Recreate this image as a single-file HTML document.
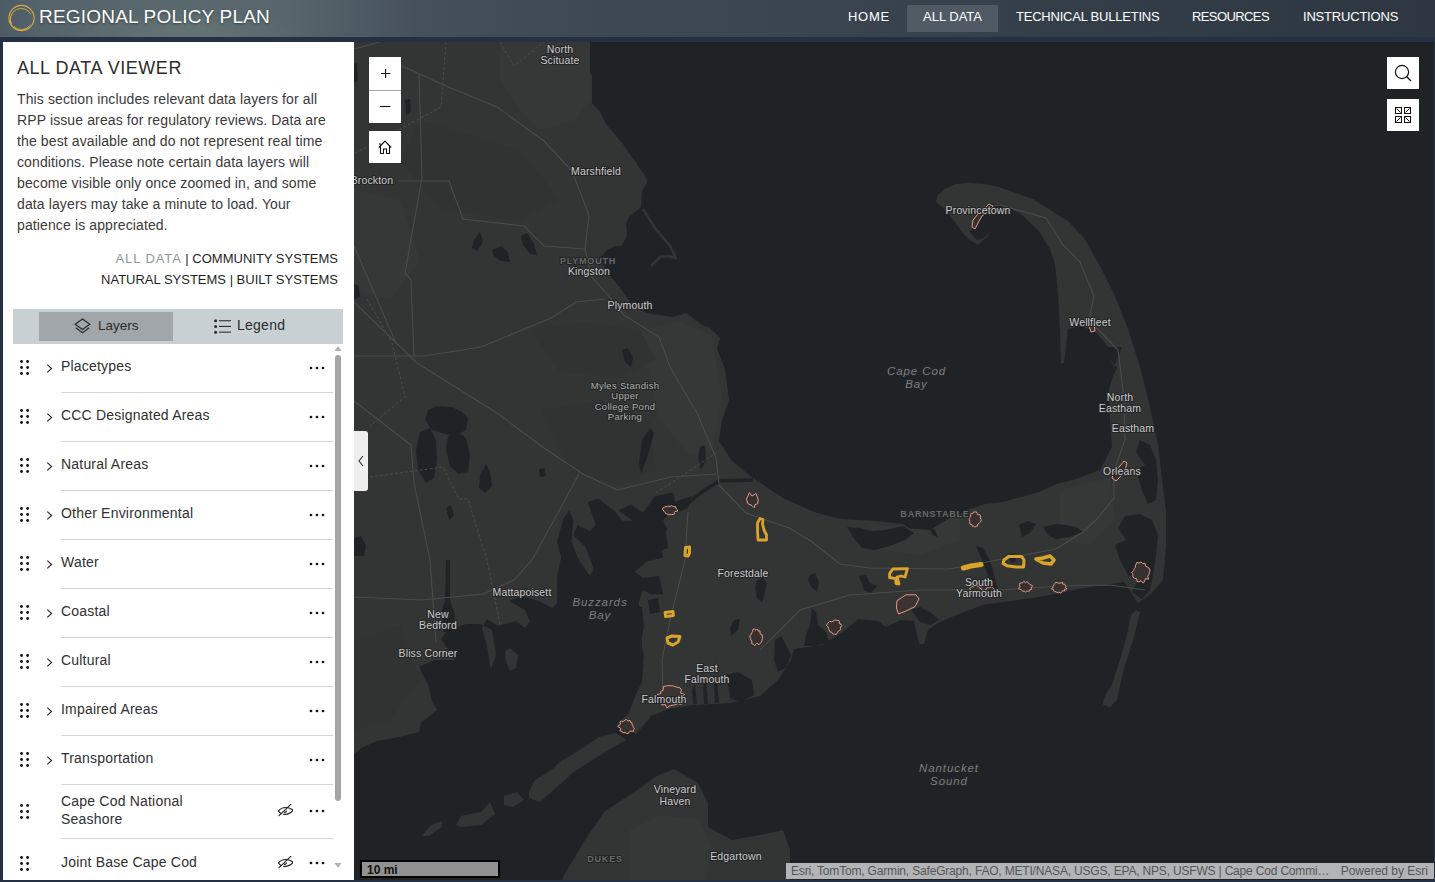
<!DOCTYPE html>
<html><head><meta charset="utf-8">
<style>
*{box-sizing:border-box;margin:0;padding:0}
html,body{width:1435px;height:882px;overflow:hidden;background:#243044;font-family:"Liberation Sans",sans-serif}
#hdr{position:absolute;left:0;top:0;width:1435px;height:37px;
background:radial-gradient(ellipse 130px 20px at 180px 32px,rgba(120,138,122,.35),rgba(120,138,122,0)),linear-gradient(90deg,#4d5c64 0%,#55646b 3%,#5a696e 14%,#57656c 20%,#4f5b64 25%,#45505a 29%,#3e4953 40%,#3a4550 56%,#353f4a 72%,#313b46 85%,#2d3641 100%)}
#logo{position:absolute;left:7px;top:4px;width:29px;height:29px}
#title{position:absolute;left:39px;top:6px;font-size:19px;color:#fff;letter-spacing:0.2px;line-height:22px;text-shadow:0 1px 2px rgba(0,0,0,.4)}
.nav{position:absolute;top:5px;height:27px;line-height:24px;font-size:13px;color:#fff;white-space:nowrap}
#panel{position:absolute;left:3px;top:42px;width:351px;height:838px;background:#fff;overflow:hidden}
#map{position:absolute;left:354px;top:42px;width:1080px;height:838px;background:#202326;overflow:hidden}

#ptitle{position:absolute;left:14px;top:15px;font-size:18px;letter-spacing:0.55px;color:#2c2c2c;line-height:22px;white-space:nowrap}
#pdesc{position:absolute;left:14px;top:47px;white-space:nowrap;font-size:14px;line-height:21px;color:#3a3a3a;letter-spacing:0.12px}
#plinks{position:absolute;right:16px;top:206px;font-size:13px;line-height:21px;color:#1f1f1f;text-align:right;white-space:nowrap}
#plinks .g{color:#8e989c;letter-spacing:0.9px}
#tabs{position:absolute;left:10px;top:267px;width:330px;height:35px;background:#c9d0d3}
#tabL{position:absolute;left:26px;top:3px;width:134px;height:29px;background:#a0a6a9}
.tabt{position:absolute;top:0;height:29px;line-height:29px;font-size:14px;color:#2b2b2b}
.row{position:absolute;left:0;width:340px;height:49px}
.drag{position:absolute;left:17px;width:10px;height:15px}
.chev{position:absolute;left:43px;width:7px;height:9px}
.rt{position:absolute;left:58px;font-size:14px;color:#303030;letter-spacing:0.2px;line-height:17px;white-space:nowrap}
.dots{position:absolute;left:306px;width:16px;height:4px}
.sep{position:absolute;left:58px;width:272px;height:1px;background:#d4d4d4}
.eye{position:absolute;left:274px;width:16px;height:14px}
#panel svg{display:block}
.drag svg,.chev svg,.dots svg,.eye svg{width:100%;height:100%}
#sb{position:absolute;left:332px;top:313px;width:6px;height:446px;background:#a5a5a5;border-radius:3px}
</style></head><body>
<div id="hdr">
  <svg id="logo" viewBox="0 0 29 29"><g fill="none" stroke="#d6ab45" stroke-width="1.1"><circle cx="14.5" cy="14" r="12.6"/><path d="M4.5 20 A10.5 10.5 0 1 1 24 10.5" stroke-width="0.9"/><path d="M5.5 9 A9.6 9.6 0 0 0 22 22.5" stroke-width="0.9"/><path d="M7 22.5 A11 11 0 0 0 23.5 21" stroke-width="0.8"/></g></svg>
  <div id="title">REGIONAL POLICY PLAN</div>
  <div class="nav" style="left:848px;letter-spacing:0.7px">HOME</div>
  <div class="nav" style="left:907px;width:91px;background:rgba(140,150,155,.3);text-align:center">ALL DATA</div>
  <div class="nav" style="left:1016px;letter-spacing:-0.22px">TECHNICAL BULLETINS</div>
  <div class="nav" style="left:1192px;letter-spacing:-0.6px">RESOURCES</div>
  <div class="nav" style="left:1303px;letter-spacing:-0.2px">INSTRUCTIONS</div>
</div>
<div id="panel">
<div id="ptitle">ALL DATA VIEWER</div>
<div id="pdesc">This section includes relevant data layers for all<br>RPP issue areas for regulatory reviews. Data are<br>the best available and do not represent real time<br>conditions. Please note certain data layers will<br>become visible only once zoomed in, and some<br>data layers may take a minute to load. Your<br>patience is appreciated.</div>
<div id="plinks"><span class="g">ALL DATA</span> | COMMUNITY SYSTEMS<br>NATURAL SYSTEMS | BUILT SYSTEMS</div>
<div id="tabs"><div id="tabL"></div><svg style="position:absolute;left:61px;top:9px" width="17" height="17" viewBox="0 0 17 17"><g fill="none" stroke="#2b2b2b" stroke-width="1.2" stroke-linejoin="miter"><path d="M8.5 1 L15.8 6.3 L8.5 11.6 L1.2 6.3Z"/><path d="M1.8 9.8 L8.5 14.8 L15.2 9.8"/></g></svg><div class="tabt" style="left:85px;top:2px;font-size:13.5px">Layers</div><svg style="position:absolute;left:201px;top:10px" width="17" height="15" viewBox="0 0 17 15"><g fill="#2b2b2b"><circle cx="1.6" cy="1.8" r="1.5"/><circle cx="1.6" cy="7.5" r="1.5"/><circle cx="1.6" cy="13.2" r="1.5"/><rect x="5" y="1.2" width="12" height="1.1"/><rect x="5" y="6.9" width="12" height="1.1"/><rect x="5" y="12.6" width="12" height="1.1"/></g></svg><div class="tabt" style="left:224px;top:2px;letter-spacing:0.25px">Legend</div></div>
<div class="drag" style="top:318.4px"><svg viewBox="0 0 10 15"><g fill="#111"><circle cx="1.5" cy="1.5" r="1.4"/><circle cx="7.6" cy="1.5" r="1.4"/><circle cx="1.5" cy="7.5" r="1.4"/><circle cx="7.6" cy="7.5" r="1.4"/><circle cx="1.5" cy="13.5" r="1.4"/><circle cx="7.6" cy="13.5" r="1.4"/></g></svg></div><div class="chev" style="top:321.5px"><svg viewBox="0 0 7 9"><path d="M1.3 0.6 L5.6 4.5 L1.3 8.4" fill="none" stroke="#222" stroke-width="1.1"/></svg></div><div class="rt" style="top:316px">Placetypes</div><div class="dots" style="top:324px"><svg viewBox="0 0 16 4"><g fill="#111"><circle cx="2" cy="2" r="1.35"/><circle cx="8" cy="2" r="1.35"/><circle cx="14" cy="2" r="1.35"/></g></svg></div><div class="sep" style="top:350px"></div>
<div class="drag" style="top:367.4px"><svg viewBox="0 0 10 15"><g fill="#111"><circle cx="1.5" cy="1.5" r="1.4"/><circle cx="7.6" cy="1.5" r="1.4"/><circle cx="1.5" cy="7.5" r="1.4"/><circle cx="7.6" cy="7.5" r="1.4"/><circle cx="1.5" cy="13.5" r="1.4"/><circle cx="7.6" cy="13.5" r="1.4"/></g></svg></div><div class="chev" style="top:370.5px"><svg viewBox="0 0 7 9"><path d="M1.3 0.6 L5.6 4.5 L1.3 8.4" fill="none" stroke="#222" stroke-width="1.1"/></svg></div><div class="rt" style="top:365px">CCC Designated Areas</div><div class="dots" style="top:373px"><svg viewBox="0 0 16 4"><g fill="#111"><circle cx="2" cy="2" r="1.35"/><circle cx="8" cy="2" r="1.35"/><circle cx="14" cy="2" r="1.35"/></g></svg></div><div class="sep" style="top:399px"></div>
<div class="drag" style="top:416.4px"><svg viewBox="0 0 10 15"><g fill="#111"><circle cx="1.5" cy="1.5" r="1.4"/><circle cx="7.6" cy="1.5" r="1.4"/><circle cx="1.5" cy="7.5" r="1.4"/><circle cx="7.6" cy="7.5" r="1.4"/><circle cx="1.5" cy="13.5" r="1.4"/><circle cx="7.6" cy="13.5" r="1.4"/></g></svg></div><div class="chev" style="top:419.5px"><svg viewBox="0 0 7 9"><path d="M1.3 0.6 L5.6 4.5 L1.3 8.4" fill="none" stroke="#222" stroke-width="1.1"/></svg></div><div class="rt" style="top:414px">Natural Areas</div><div class="dots" style="top:422px"><svg viewBox="0 0 16 4"><g fill="#111"><circle cx="2" cy="2" r="1.35"/><circle cx="8" cy="2" r="1.35"/><circle cx="14" cy="2" r="1.35"/></g></svg></div><div class="sep" style="top:448px"></div>
<div class="drag" style="top:465.4px"><svg viewBox="0 0 10 15"><g fill="#111"><circle cx="1.5" cy="1.5" r="1.4"/><circle cx="7.6" cy="1.5" r="1.4"/><circle cx="1.5" cy="7.5" r="1.4"/><circle cx="7.6" cy="7.5" r="1.4"/><circle cx="1.5" cy="13.5" r="1.4"/><circle cx="7.6" cy="13.5" r="1.4"/></g></svg></div><div class="chev" style="top:468.5px"><svg viewBox="0 0 7 9"><path d="M1.3 0.6 L5.6 4.5 L1.3 8.4" fill="none" stroke="#222" stroke-width="1.1"/></svg></div><div class="rt" style="top:463px">Other Environmental</div><div class="dots" style="top:471px"><svg viewBox="0 0 16 4"><g fill="#111"><circle cx="2" cy="2" r="1.35"/><circle cx="8" cy="2" r="1.35"/><circle cx="14" cy="2" r="1.35"/></g></svg></div><div class="sep" style="top:497px"></div>
<div class="drag" style="top:514.4px"><svg viewBox="0 0 10 15"><g fill="#111"><circle cx="1.5" cy="1.5" r="1.4"/><circle cx="7.6" cy="1.5" r="1.4"/><circle cx="1.5" cy="7.5" r="1.4"/><circle cx="7.6" cy="7.5" r="1.4"/><circle cx="1.5" cy="13.5" r="1.4"/><circle cx="7.6" cy="13.5" r="1.4"/></g></svg></div><div class="chev" style="top:517.5px"><svg viewBox="0 0 7 9"><path d="M1.3 0.6 L5.6 4.5 L1.3 8.4" fill="none" stroke="#222" stroke-width="1.1"/></svg></div><div class="rt" style="top:512px">Water</div><div class="dots" style="top:520px"><svg viewBox="0 0 16 4"><g fill="#111"><circle cx="2" cy="2" r="1.35"/><circle cx="8" cy="2" r="1.35"/><circle cx="14" cy="2" r="1.35"/></g></svg></div><div class="sep" style="top:546px"></div>
<div class="drag" style="top:563.4px"><svg viewBox="0 0 10 15"><g fill="#111"><circle cx="1.5" cy="1.5" r="1.4"/><circle cx="7.6" cy="1.5" r="1.4"/><circle cx="1.5" cy="7.5" r="1.4"/><circle cx="7.6" cy="7.5" r="1.4"/><circle cx="1.5" cy="13.5" r="1.4"/><circle cx="7.6" cy="13.5" r="1.4"/></g></svg></div><div class="chev" style="top:566.5px"><svg viewBox="0 0 7 9"><path d="M1.3 0.6 L5.6 4.5 L1.3 8.4" fill="none" stroke="#222" stroke-width="1.1"/></svg></div><div class="rt" style="top:561px">Coastal</div><div class="dots" style="top:569px"><svg viewBox="0 0 16 4"><g fill="#111"><circle cx="2" cy="2" r="1.35"/><circle cx="8" cy="2" r="1.35"/><circle cx="14" cy="2" r="1.35"/></g></svg></div><div class="sep" style="top:595px"></div>
<div class="drag" style="top:612.4px"><svg viewBox="0 0 10 15"><g fill="#111"><circle cx="1.5" cy="1.5" r="1.4"/><circle cx="7.6" cy="1.5" r="1.4"/><circle cx="1.5" cy="7.5" r="1.4"/><circle cx="7.6" cy="7.5" r="1.4"/><circle cx="1.5" cy="13.5" r="1.4"/><circle cx="7.6" cy="13.5" r="1.4"/></g></svg></div><div class="chev" style="top:615.5px"><svg viewBox="0 0 7 9"><path d="M1.3 0.6 L5.6 4.5 L1.3 8.4" fill="none" stroke="#222" stroke-width="1.1"/></svg></div><div class="rt" style="top:610px">Cultural</div><div class="dots" style="top:618px"><svg viewBox="0 0 16 4"><g fill="#111"><circle cx="2" cy="2" r="1.35"/><circle cx="8" cy="2" r="1.35"/><circle cx="14" cy="2" r="1.35"/></g></svg></div><div class="sep" style="top:644px"></div>
<div class="drag" style="top:661.4px"><svg viewBox="0 0 10 15"><g fill="#111"><circle cx="1.5" cy="1.5" r="1.4"/><circle cx="7.6" cy="1.5" r="1.4"/><circle cx="1.5" cy="7.5" r="1.4"/><circle cx="7.6" cy="7.5" r="1.4"/><circle cx="1.5" cy="13.5" r="1.4"/><circle cx="7.6" cy="13.5" r="1.4"/></g></svg></div><div class="chev" style="top:664.5px"><svg viewBox="0 0 7 9"><path d="M1.3 0.6 L5.6 4.5 L1.3 8.4" fill="none" stroke="#222" stroke-width="1.1"/></svg></div><div class="rt" style="top:659px">Impaired Areas</div><div class="dots" style="top:667px"><svg viewBox="0 0 16 4"><g fill="#111"><circle cx="2" cy="2" r="1.35"/><circle cx="8" cy="2" r="1.35"/><circle cx="14" cy="2" r="1.35"/></g></svg></div><div class="sep" style="top:693px"></div>
<div class="drag" style="top:710.4px"><svg viewBox="0 0 10 15"><g fill="#111"><circle cx="1.5" cy="1.5" r="1.4"/><circle cx="7.6" cy="1.5" r="1.4"/><circle cx="1.5" cy="7.5" r="1.4"/><circle cx="7.6" cy="7.5" r="1.4"/><circle cx="1.5" cy="13.5" r="1.4"/><circle cx="7.6" cy="13.5" r="1.4"/></g></svg></div><div class="chev" style="top:713.5px"><svg viewBox="0 0 7 9"><path d="M1.3 0.6 L5.6 4.5 L1.3 8.4" fill="none" stroke="#222" stroke-width="1.1"/></svg></div><div class="rt" style="top:708px">Transportation</div><div class="dots" style="top:716px"><svg viewBox="0 0 16 4"><g fill="#111"><circle cx="2" cy="2" r="1.35"/><circle cx="8" cy="2" r="1.35"/><circle cx="14" cy="2" r="1.35"/></g></svg></div><div class="sep" style="top:742px"></div>
<div class="drag" style="top:762.4px"><svg viewBox="0 0 10 15"><g fill="#111"><circle cx="1.5" cy="1.5" r="1.4"/><circle cx="7.6" cy="1.5" r="1.4"/><circle cx="1.5" cy="7.5" r="1.4"/><circle cx="7.6" cy="7.5" r="1.4"/><circle cx="1.5" cy="13.5" r="1.4"/><circle cx="7.6" cy="13.5" r="1.4"/></g></svg></div><div class="rt" style="top:751px">Cape Cod National</div><div class="rt" style="top:769px">Seashore</div><div class="eye" style="top:762px"><svg viewBox="0 0 16 14"><g fill="none" stroke="#1a1a1a" stroke-width="1.1" stroke-linecap="round"><path d="M1.5 7 Q7 0.5 16 6"/><path d="M16 6.4 Q12 11 6.5 10.3"/><path d="M1.5 7 L3.6 9.3"/><path d="M7.2 8.3 Q8.8 8.6 9.6 7"/><path d="M2 11.7 L14 0.2"/></g></svg></div><div class="dots" style="top:767px"><svg viewBox="0 0 16 4"><g fill="#111"><circle cx="2" cy="2" r="1.35"/><circle cx="8" cy="2" r="1.35"/><circle cx="14" cy="2" r="1.35"/></g></svg></div><div class="sep" style="top:796px"></div>
<div class="drag" style="top:814.4px"><svg viewBox="0 0 10 15"><g fill="#111"><circle cx="1.5" cy="1.5" r="1.4"/><circle cx="7.6" cy="1.5" r="1.4"/><circle cx="1.5" cy="7.5" r="1.4"/><circle cx="7.6" cy="7.5" r="1.4"/><circle cx="1.5" cy="13.5" r="1.4"/><circle cx="7.6" cy="13.5" r="1.4"/></g></svg></div><div class="rt" style="top:812px">Joint Base Cape Cod</div><div class="eye" style="top:814px"><svg viewBox="0 0 16 14"><g fill="none" stroke="#1a1a1a" stroke-width="1.1" stroke-linecap="round"><path d="M1.5 7 Q7 0.5 16 6"/><path d="M16 6.4 Q12 11 6.5 10.3"/><path d="M1.5 7 L3.6 9.3"/><path d="M7.2 8.3 Q8.8 8.6 9.6 7"/><path d="M2 11.7 L14 0.2"/></g></svg></div><div class="dots" style="top:819px"><svg viewBox="0 0 16 4"><g fill="#111"><circle cx="2" cy="2" r="1.35"/><circle cx="8" cy="2" r="1.35"/><circle cx="14" cy="2" r="1.35"/></g></svg></div>
<svg style="position:absolute;left:331px;top:303px" width="8" height="7" viewBox="0 0 8 7"><path d="M4 1 L7.5 6 L0.5 6Z" fill="#b0b0b0"/></svg>
<div id="sb"></div>
<svg style="position:absolute;left:331px;top:819.5px" width="8" height="7" viewBox="0 0 8 7"><path d="M4 6 L7.5 1 L0.5 1Z" fill="#b0b0b0"/></svg>
</div>
<div id="map"><svg width="1080" height="838" viewBox="354 42 1080 838" style="position:absolute;left:0;top:0">
<rect x="354" y="42" width="1080" height="838" fill="#202326"/>
<g fill="#333534">
<path d="M340,30 L589,30 L589,42 L585,62 L592,76 L592,103 L600,112 L606,124 L623,144 L627,150 L641,170 L647,179 L647,183 L642,191 L641,207 L629,217 L626,223 L627,236 L621,246 L615,246 L607,250 L600,258 L607,272 L621,289 L631,303 L647,313 L672,317 L686,313 L702,325 L710,328 L720,338 L717,349 L725,369 L729,400 L722,420 L719,441 L732,461 L753,478 L783,498 L814,512 L840,519 L876,521 L903,524 L916,533 L931,532 L949,521 L967,510 L985,504 L1003,502 L1021,497 L1039,492 L1057,484 L1076,479 L1100,470 L1112,447 L1110,420 L1109,389 L1113,376 L1117,368 L1110,359 L1114,367 L1122,347 L1108,347 L1096,332 L1081,326 L1068,329 L1064,363 L1061,363 L1060,330 L1058,294 L1055,264 L1050,249 L1039,231 L1022,215 L1008,207 L989,203 L979,214 L973,227 L970,232 L977,240 L984,238 L991,230 L986,238 L978,245 L970,240 L962,232 L955,222 L946,210 L936,202 L938,195 L945,189 L956,184 L968,183 L984,184 L999,187 L1016,193 L1033,199 L1050,210 L1069,222 L1084,238 L1099,264 L1114,294 L1128,329 L1140,367 L1149,403 L1158,444 L1161,471 L1166,512 L1166,546 L1163,580 L1151,594 L1138,603 L1124,582 L1090,587 L1039,597 L988,604 L980,606 L954,616 L938,623 L928,630 L924,644 L919,644 L914,621 L901,620 L886,627 L878,621 L858,619 L843,632 L822,645 L794,649 L791,660 L778,680 L760,696 L731,703 L694,705 L669,709 L651,716 L638,732 L636,734 L620,727 L616,725 L629,713 L636,694 L642,682 L644,654 L640,644 L644,627 L642,607 L561,599 L552,608 L539,601 L521,596 L509,601 L525,610 L530,621 L525,628 L516,621 L498,626 L487,619 L482,628 L487,646 L491,669 L496,655 L492,630 L480,624 L466,624 L448,630 L441,639 L455,660 L434,660 L419,667 L428,685 L432,701 L437,710 L421,723 L419,732 L399,737 L377,741 L361,748 L354,755 L340,760Z"/>
<path d="M1136,610 L1140,612 L1133,640 L1125,665 L1120,685 L1117,700 L1110,707 L1103,705 L1104,698 L1112,684 L1120,660 L1127,635 L1131,615Z"/>
<path d="M555,900 L563,877 L585,840 L605,811 L633,793 L657,776 L674,769 L698,783 L708,803 L708,827 L732,840 L766,834 L783,830 L790,850 L790,900Z"/>
<path d="M505,651 L510,648 L518,655 L516,668 L510,671 L506,662Z"/>
<path d="M422,836 L431,825 L442,821 L442,827 L429,836Z"/>
<path d="M456,825 L461,816 L481,812 L490,802 L495,814 L481,825 L461,827Z"/>
<path d="M504,796 L517,792 L524,800 L513,807 L504,805Z"/>
<path d="M529,791 L535,780 L554,768 L561,761 L580,750 L599,737 L616,733 L626,740 L602,754 L575,771 L540,802 L529,798Z"/>
</g>
<path d="M643,209 L655,228 L670,246 L676,258 L668,256 L660,257 L651,266" fill="none" stroke="#333534" stroke-width="2.6" stroke-linejoin="round"/>
<g fill="#363837"><path d="M630,830 L660,815 L700,820 L712,850 L705,880 L630,880Z"/><path d="M500,42 L590,42 L590,100 L575,120 L540,130 L520,110 L500,80Z"/><path d="M640,330 L680,322 L712,335 L722,400 L712,450 L690,455 L660,420 L650,380Z"/><path d="M870,525 L930,530 L960,512 L960,540 L920,555 L880,550Z"/><path d="M1060,490 L1110,478 L1115,520 L1090,545 L1060,540Z"/><path d="M354,190 L400,200 L420,260 L390,300 L354,290Z"/></g>
<g fill="#313332"><path d="M420,120 L520,150 L560,200 L520,220 L440,210 L400,160Z"/><path d="M530,330 L580,322 L640,330 L656,360 L620,378 L560,372Z"/><path d="M540,410 L600,400 L650,420 L656,470 L620,486 L570,470Z"/><path d="M354,640 L400,625 L420,680 L390,720 L354,730Z"/></g>
<g fill="#202326"><path d="M557.1,659.9 L557.1,575.9 L561.2,557.5 L557.1,541.2 L563.2,518.8 L569.4,510.6 L573.4,520.8 L571.4,541.2 L577.5,557.5 L589.8,575.9 L593.8,569.8 L585.7,547.3 L573.4,535.1 L577.5,524.9 L589.8,531.0 L595.9,524.9 L587.7,502.4 L597.9,498.4 L614.2,510.6 L622.4,520.8 L632.6,520.8 L618.3,510.6 L630.6,504.5 L642.8,512.6 L655.0,496.3 L673.4,492.2 L675.4,504.5 L663.2,520.8 L667.3,529.0 L659.1,541.2 L663.2,557.5 L646.9,561.6 L634.6,571.8 L642.8,577.9 L659.1,575.9 L663.2,594.2 L651.0,594.2 L642.8,590.2 L638.7,602.4 L640.8,622.8 L642.8,659.9Z"/><path d="M428,410 L437,406 L452,407 L462,412 L468,418 L466,430 L455,436 L445,434 L432,430 L425,420Z"/><path d="M420,432 L430,428 L436,440 L437,460 L434,478 L426,483 L418,470 L416,450Z"/><path d="M448,436 L458,432 L466,438 L470,455 L468,472 L458,474 L450,466 L446,450Z"/><path d="M622,350 L628,348 L633,358 L631,367 L625,362Z"/><path d="M642,440 L650,428 L654,433 L648,455 L641,474 L639,462Z"/><path d="M700,447 L705,445 L706,460 L701,470 L698,458Z"/><path d="M480,475 L486,464 L490,472 L492,486 L485,493 L479,488Z"/><path d="M354,538 L361,536 L366,546 L364,556 L354,556Z"/><path d="M624,52 L629,49 L632,60 L628,66 L624,58Z"/><path d="M474,240 L480,232 L483,242 L477,251 L472,248Z"/><path d="M492,250 L501,246 L508,252 L510,262 L501,261 L494,256Z"/><path d="M521,236 L527,233 L534,244 L537,255 L530,254 L523,245Z"/><path d="M405,100 L410,99 L411,111 L406,116Z"/><path d="M354,64 L357,63 L358,81 L354,83Z"/><path d="M354,284 L359,286 L360,297 L354,299Z"/><path d="M539,469 L545,468 L546,476 L540,477Z"/><path d="M446,508 L451,505 L454,516 L449,520Z"/><path d="M446,560 L450,560 L450,600 L455,615 L454,632 L443,632 L442,610 L445,600Z"/><path d="M847,527 L860,528 L872,531 L885,530 L903,526 L914,533 L905,540 L890,546 L875,550 L862,548 L855,540Z"/><path d="M928,527 L935,530 L938,538 L932,534Z"/><path d="M1140,440 L1150,445 L1156,460 L1158,480 L1156,500 L1148,504 L1142,490 L1136,470 L1145,465 L1136,452Z"/><path d="M1125,516 L1140,514 L1152,520 L1158,535 L1156,555 L1153,575 L1150,590 L1142,599 L1132,592 L1138,580 L1128,575 L1120,560 L1115,545 L1126,540 L1118,528Z"/><path d="M976,546 L983,548 L990,560 L994,575 L998,590 L992,590 L988,575 L982,560Z"/><path d="M757,580 L763,578 L767,583 L765,592 L762,603 L757,598 L755,588Z"/><path d="M810,575 L815,573 L819,582 L817,592 L812,588 L808,580Z"/><path d="M859,576 L866,575 L870,583 L877,586 L871,593 L864,590Z"/><path d="M734,620 L740,619 L738,630 L731,636 L730,628Z"/><path d="M1019,525 L1028,521 L1036,524 L1030,533 L1022,537Z"/><path d="M1043,527 L1055,524 L1066,525 L1076,527 L1083,532 L1070,537 L1056,539 L1048,535Z"/><path d="M1009,555 L1014,553 L1016,561 L1011,563Z"/><path d="M812,608 L816,612 L818,625 L826,632 L829,642 L815,646 L804,646 L806,635 L810,625Z"/><path d="M911,610 L920,607 L930,612 L939,620 L930,625 L920,622Z"/><path d="M727,675 L738,672 L752,680 L754,695 L740,702 L730,698Z"/><path d="M775,640 L781,636 L786,645 L791,655 L786,668 L778,672 L774,660Z"/><path d="M692,690 L695,684 L697,704 L693,704Z"/><path d="M703,686 L706,680 L708,704 L704,704Z"/><path d="M714,684 L717,680 L719,703 L715,703Z"/><path d="M646,540 L658,536 L666,532 L668,548 L657,552 L648,550Z"/><path d="M648,600 L658,598 L660,612 L650,614Z"/><path d="M665,506 L680,500 L692,496 L688,508 L672,514Z"/></g>
<path d="M654,512 L681,509 L702,492 L719,481 L753,480" fill="none" stroke="#202326" stroke-width="3.5"/>
<g fill="none" stroke="#4a4c4c" stroke-width="1.1"><path d="M402,66 L446,86 L497,107 L544,141 L572,171 L589,215 L585,249 L592,277 L612,300 L624,315 L659,337 L671,369 L697,413 L716,458 L719,483"/><path d="M419,73 L422,178 L405,273 L411,280 L414,356"/><path d="M354,246 L395,341"/><path d="M398,181 L449,181 L463,219 L524,226 L544,246 L585,249"/><path d="M354,302 L417,363 L497,413 L544,448 L583,474 L617,490 L671,477 L716,474"/><path d="M354,356 L424,356 L481,347 L551,318 L576,302 L605,299"/><path d="M354,401 L411,445 L414,483 L430,560 L436,642"/><path d="M579,474 L560,509 L532,560 L514,580 L483,594 L422,600 L354,597"/><path d="M719,485 L746,513 L789,528 L811,541 L840,564 L869,568 L949,569 L1003,559 L1056,549 L1083,532 L1097,519 L1114,498 L1114,471 L1125,440 L1124,398 L1118,350 L1089,320 L1094,296 L1080,262 L1063,245 L1046,218 L1000,205 L960,212"/><path d="M688,512 L685,560 L670,620 L662,660 L663,700"/><path d="M760,650 L800,610 L850,595 L920,590 L1000,590 L1060,586 L1110,585 L1145,590"/><path d="M354,49 L380,42"/></g>
<g fill="none" stroke="#4a4c4c" stroke-width="1" stroke-dasharray="3,2"><path d="M446,42 L441,107 L354,154"/><path d="M500,42 L514,66 L544,42"/><path d="M367,299 L392,343 L405,397 L370,426"/><path d="M370,477 L443,467 L459,499 L468,499 L487,560 L500,624"/><path d="M656,493 L719,451"/></g>
<g fill="none" stroke="#dba52c" stroke-linejoin="round" stroke-linecap="round"><path d="M760,518.5 L763,519.5 L762.5,524 L764,530 L766.5,535 L766.5,540 L758,540 L757.5,530 L757.5,523Z" stroke-width="2.8"/><path d="M685.5,547.5 L689.5,547 L689.5,553 L688,556 L685,555.5Z" stroke-width="3"/><path d="M892.7,569 L907.5,568.6 L906.5,572 L905,577 L901,576 L897,577 L899,584 L896,583.5 L895.6,578.6 L889.5,577.5 L889.7,573.4Z" stroke-width="2.8"/><path d="M665,612.5 L673,611.5 L673.5,615.5 L665.5,616.5Z" stroke-width="2.8"/><path d="M667,638 L672,636 L680,636.5 L678,642 L673,645 L668,643Z" stroke-width="3"/><path d="M963.4,568 L971,566 L981,564.6" stroke-width="5"/><path d="M1004,560 L1008.7,556.5 L1021.7,556.5 L1024,560 L1023.6,567 L1016,567 L1007,565.7 L1003,563.4Z" stroke-width="3"/><path d="M1036,559 L1043,558 L1050,556 L1054,560 L1051,564 L1043,563Z" stroke-width="3.6"/></g>
<g stroke="#e6998a" stroke-width="1" stroke-linejoin="round"><path d="M749.5,492.7 L752,496 L756,493.5 L758.3,499.8 L757.5,503.8 L755,504.6 L754.3,507.8 L752,505.5 L748,503.8 L746.4,499Z" fill="#36302f"/><path d="M677.6,510.0 L677.4,511.2 L674.9,511.6 L674.3,512.4 L674.5,513.9 L673.1,514.4 L671.5,514.7 L670.0,514.2 L668.5,514.6 L667.1,514.2 L665.8,513.6 L665.5,512.5 L664.3,511.9 L663.9,511.0 L663.0,510.0 L662.5,508.8 L663.2,507.7 L664.8,507.1 L666.0,506.6 L667.4,506.3 L668.8,506.3 L670.0,506.3 L671.4,505.7 L672.6,506.2 L673.9,506.6 L675.8,506.8 L675.9,508.0 L676.5,509.0Z" fill="#36302f"/><path d="M897,600.7 L906,594.8 L916,594.8 L919,599 L915,606.6 L906,611 L898.6,614 L896.4,608Z" fill="#3c3432"/><path d="M840.8,627.0 L840.3,628.2 L840.6,629.7 L839.3,630.5 L838.2,631.3 L837.4,632.6 L836.3,634.3 L834.5,634.2 L832.8,633.9 L831.8,632.3 L830.1,632.1 L829.5,630.7 L828.9,629.5 L828.6,628.2 L828.2,627.0 L826.6,625.3 L827.4,623.8 L828.4,622.5 L829.7,621.4 L831.8,621.8 L833.0,621.1 L834.5,620.2 L836.2,620.1 L837.9,620.4 L839.5,621.2 L839.2,623.6 L841.0,624.1 L841.7,625.5Z" fill="#36302f"/><path d="M762.3,637.0 L762.4,638.8 L762.0,640.6 L761.4,642.4 L760.1,643.4 L759.0,644.8 L757.1,643.1 L756.0,644.4 L754.5,645.5 L753.3,644.1 L751.7,643.7 L752.0,641.0 L750.7,640.2 L750.7,638.5 L749.9,637.0 L750.0,635.3 L751.5,634.3 L751.8,632.8 L752.6,631.6 L753.0,629.2 L754.5,629.0 L756.0,630.4 L757.5,628.9 L758.3,631.1 L759.9,630.9 L760.1,633.0 L760.4,634.3 L762.6,635.1Z" fill="#36302f"/><path d="M981.1,519.5 L981.0,521.2 L979.9,522.5 L978.9,523.5 L977.8,524.0 L977.5,526.2 L976.2,526.3 L975.0,527.2 L973.8,526.0 L972.4,526.4 L971.9,524.5 L970.2,524.3 L969.6,522.8 L969.8,521.0 L969.4,519.5 L969.3,517.8 L970.6,516.8 L970.6,515.1 L971.2,513.4 L972.8,513.7 L973.6,511.9 L975.0,512.0 L976.4,511.8 L977.2,513.6 L977.9,514.8 L979.8,514.7 L980.5,516.1 L980.3,518.0Z" fill="#36302f"/><path d="M1031.6,587.0 L1031.0,588.0 L1031.7,589.3 L1029.8,589.6 L1029.6,591.0 L1028.2,591.3 L1026.7,591.1 L1025.5,592.0 L1024.3,591.1 L1022.7,591.4 L1022.1,590.3 L1021.2,589.7 L1019.8,589.1 L1018.4,588.2 L1019.9,587.0 L1019.8,586.0 L1019.4,584.7 L1019.6,583.4 L1021.3,583.0 L1022.8,582.7 L1023.8,581.3 L1025.5,582.8 L1027.1,581.5 L1028.1,582.8 L1029.0,583.6 L1029.9,584.3 L1031.0,585.0 L1032.6,585.8Z" fill="#36302f"/><path d="M1065.3,587.5 L1067.0,588.8 L1064.5,589.4 L1064.9,590.8 L1062.7,590.8 L1061.8,591.6 L1060.8,593.3 L1059.0,592.0 L1057.4,592.6 L1056.0,591.9 L1054.7,591.3 L1053.5,590.6 L1053.4,589.4 L1051.4,588.7 L1053.0,587.5 L1052.8,586.5 L1053.8,585.7 L1054.0,584.6 L1054.8,583.7 L1055.5,582.3 L1057.5,582.8 L1059.0,583.2 L1060.4,583.0 L1062.6,582.2 L1062.7,584.2 L1064.7,584.2 L1065.0,585.4 L1066.2,586.3Z" fill="#36302f"/><path d="M1149.4,572.5 L1148.9,574.5 L1147.7,576.1 L1148.5,579.2 L1145.4,578.6 L1144.7,581.1 L1143.2,583.1 L1141.0,580.6 L1139.1,581.9 L1137.2,581.4 L1136.6,578.7 L1134.6,578.2 L1132.8,576.9 L1132.9,574.6 L1131.8,572.5 L1133.7,570.6 L1134.1,568.8 L1135.3,567.4 L1135.7,565.1 L1136.7,562.6 L1139.0,562.9 L1141.0,562.1 L1142.8,563.6 L1145.0,563.2 L1145.5,566.1 L1147.1,567.0 L1149.1,568.1 L1150.0,570.2Z" fill="#36302f"/><path d="M1112,478 L1115,470 L1120,466 L1124,461 L1127,463 L1125,470 L1120,477 L1116,481Z" fill="#36302f"/><path d="M972,227 L973,220 L978,214 L984,209 L989,204 L993,206 L990,210 L982,216 L978,223 L975,229Z" fill="#36302f"/><path d="M1089,325 L1094,325 L1095,331 L1091,332Z" fill="#36302f"/><path d="M681.6,697.0 L683.7,699.4 L682.7,701.7 L681.7,704.2 L677.0,703.7 L675.0,704.9 L672.4,705.2 L670.0,705.8 L666.8,707.8 L665.3,704.5 L661.8,704.9 L661.1,702.5 L659.3,700.9 L657.7,699.2 L655.1,697.0 L656.7,694.7 L660.8,693.6 L660.8,691.4 L663.2,690.4 L663.4,686.5 L666.7,685.9 L670.0,685.7 L673.3,685.9 L676.2,687.0 L679.7,687.6 L681.5,690.0 L680.5,693.1 L684.6,694.4Z" fill="#3c3432"/><path d="M632.7,726.5 L634.5,728.1 L633.7,729.5 L633.5,731.3 L630.7,731.1 L629.4,731.7 L628.3,733.5 L626.5,733.5 L625.0,732.3 L623.0,732.8 L622.0,731.4 L619.9,731.0 L620.9,728.8 L620.1,727.8 L617.7,726.5 L619.6,725.1 L620.5,724.0 L619.9,721.9 L621.6,721.1 L623.7,721.5 L624.8,720.0 L626.5,719.5 L627.9,721.1 L630.0,720.3 L630.4,722.3 L631.9,722.7 L632.0,724.2 L632.9,725.2Z" fill="#36302f"/><path d="M983.0,591.0 L980.8,591.9 L981.9,593.4 L980.1,593.7 L980.4,595.6 L978.2,594.7 L977.5,596.5 L976.0,596.3 L974.5,596.5 L972.9,596.3 L972.6,594.5 L971.6,593.9 L970.2,593.3 L970.6,592.0 L970.5,591.0 L970.7,590.0 L969.9,588.6 L970.7,587.5 L971.9,586.7 L973.7,586.9 L974.5,585.4 L976.0,586.0 L977.2,586.6 L978.6,586.6 L979.6,587.2 L980.0,588.4 L981.5,588.8 L981.6,589.9Z" fill="#36302f"/><path d="M994.8,590.5 L994.9,591.3 L994.4,592.0 L994.0,592.6 L993.2,593.1 L992.6,593.8 L991.4,593.6 L990.5,594.2 L989.7,593.3 L988.7,593.4 L987.9,593.1 L987.4,592.4 L986.1,592.2 L986.4,591.2 L985.5,590.5 L985.4,589.6 L986.8,589.1 L986.5,588.0 L987.4,587.5 L988.4,587.2 L989.7,587.7 L990.5,587.1 L991.5,586.9 L992.3,587.6 L993.0,588.0 L993.8,588.5 L994.2,589.1 L995.3,589.6Z" fill="#36302f"/></g>
<g font-family="Liberation Sans, sans-serif" text-anchor="middle" stroke="#222425" stroke-width="2" paint-order="stroke" stroke-linejoin="round">
<text x="560" y="53" font-size="10.5" fill="#cdcdcd" letter-spacing="0.15">North</text>
<text x="560" y="64" font-size="10.5" fill="#cdcdcd" letter-spacing="0.15">Scituate</text>
<text x="596" y="175" font-size="10.5" fill="#cdcdcd" letter-spacing="0.15">Marshfield</text>
<text x="372" y="184" font-size="10.5" fill="#cdcdcd" letter-spacing="0.15">Brockton</text>
<text x="588" y="264" font-size="9" fill="#666868" font-weight="bold" letter-spacing="0.8">PLYMOUTH</text>
<text x="589" y="275" font-size="10.5" fill="#cdcdcd" letter-spacing="0.15">Kingston</text>
<text x="630" y="309" font-size="10.5" fill="#cdcdcd" letter-spacing="0.15">Plymouth</text>
<text x="625" y="389" font-size="9.5" fill="#b0b0b0" letter-spacing="0.3">Myles Standish</text>
<text x="625" y="399" font-size="9.5" fill="#b0b0b0" letter-spacing="0.3">Upper</text>
<text x="625" y="410" font-size="9.5" fill="#b0b0b0" letter-spacing="0.3">College Pond</text>
<text x="625" y="420" font-size="9.5" fill="#b0b0b0" letter-spacing="0.3">Parking</text>
<text x="916.5" y="375" font-size="11.5" fill="#7c7e80" font-style="italic" letter-spacing="0.9">Cape Cod</text>
<text x="916.5" y="388" font-size="11.5" fill="#7c7e80" font-style="italic" letter-spacing="0.9">Bay</text>
<text x="978" y="214" font-size="10.5" fill="#cdcdcd" letter-spacing="0.15">Provincetown</text>
<text x="1090" y="326" font-size="10.5" fill="#cdcdcd" letter-spacing="0.15">Wellfleet</text>
<text x="1120" y="401" font-size="10.5" fill="#cdcdcd" letter-spacing="0.15">North</text>
<text x="1120" y="412" font-size="10.5" fill="#cdcdcd" letter-spacing="0.15">Eastham</text>
<text x="1133" y="432" font-size="10.5" fill="#cdcdcd" letter-spacing="0.15">Eastham</text>
<text x="1122" y="475" font-size="10.5" fill="#cdcdcd" letter-spacing="0.15">Orleans</text>
<text x="935" y="517" font-size="9" fill="#666868" font-weight="bold" letter-spacing="0.8">BARNSTABLE</text>
<text x="743" y="577" font-size="10.5" fill="#cdcdcd" letter-spacing="0.15">Forestdale</text>
<text x="979" y="586" font-size="10.5" fill="#cdcdcd" letter-spacing="0.15">South</text>
<text x="979" y="597" font-size="10.5" fill="#cdcdcd" letter-spacing="0.15">Yarmouth</text>
<text x="522" y="596" font-size="10.5" fill="#cdcdcd" letter-spacing="0.15">Mattapoisett</text>
<text x="600" y="606" font-size="11.5" fill="#7c7e80" font-style="italic" letter-spacing="0.9">Buzzards</text>
<text x="600" y="619" font-size="11.5" fill="#7c7e80" font-style="italic" letter-spacing="0.9">Bay</text>
<text x="438" y="618" font-size="10.5" fill="#cdcdcd" letter-spacing="0.15">New</text>
<text x="438" y="629" font-size="10.5" fill="#cdcdcd" letter-spacing="0.15">Bedford</text>
<text x="428" y="657" font-size="10.5" fill="#cdcdcd" letter-spacing="0.15">Bliss Corner</text>
<text x="707" y="672" font-size="10.5" fill="#cdcdcd" letter-spacing="0.15">East</text>
<text x="707" y="683" font-size="10.5" fill="#cdcdcd" letter-spacing="0.15">Falmouth</text>
<text x="664" y="703" font-size="10.5" fill="#cdcdcd" letter-spacing="0.15">Falmouth</text>
<text x="675" y="793" font-size="10.5" fill="#cdcdcd" letter-spacing="0.15">Vineyard</text>
<text x="675" y="805" font-size="10.5" fill="#cdcdcd" letter-spacing="0.15">Haven</text>
<text x="949" y="772" font-size="11.5" fill="#7c7e80" font-style="italic" letter-spacing="0.9">Nantucket</text>
<text x="949" y="785" font-size="11.5" fill="#7c7e80" font-style="italic" letter-spacing="0.9">Sound</text>
<text x="605" y="862" font-size="9" fill="#666868" font-weight="bold" letter-spacing="0.8">DUKES</text>
<text x="736" y="860" font-size="10.5" fill="#cdcdcd" letter-spacing="0.15">Edgartown</text>
</g>
</svg>
<div style="position:absolute;left:15px;top:15px;width:32px;height:66px;background:#fff"></div>
<div style="position:absolute;left:15px;top:48px;width:32px;height:1px;background:#a8a8a8"></div>
<svg style="position:absolute;left:15px;top:15px" width="32" height="33" viewBox="0 0 32 33"><path d="M16.6 11.9 V21.1 M12 16.5 H21.3" stroke="#111" stroke-width="1.1"/></svg>
<svg style="position:absolute;left:15px;top:49px" width="32" height="32" viewBox="0 0 32 32"><path d="M11 15.5 H21.3" stroke="#111" stroke-width="1.1"/></svg>
<div style="position:absolute;left:15px;top:89px;width:32px;height:32px;background:#fff"></div>
<svg style="position:absolute;left:15px;top:89px" width="32" height="32" viewBox="0 0 32 32"><path d="M9.8 16.5 L16 10 L22.2 16.5 M11.5 15 V22.5 H14.5 V18 H17.5 V22.5 H20.5 V15 M11 12 V14" fill="none" stroke="#111" stroke-width="1.1"/></svg>
<div style="position:absolute;left:1033px;top:15px;width:32px;height:32px;background:#fff"></div>
<svg style="position:absolute;left:1033px;top:15px" width="32" height="32" viewBox="0 0 32 32"><circle cx="15" cy="15" r="6.6" fill="none" stroke="#111" stroke-width="1.2"/><path d="M19.8 19.8 L24 24" stroke="#111" stroke-width="1.3"/></svg>
<div style="position:absolute;left:1033px;top:57px;width:32px;height:32px;background:#fff"></div>
<svg style="position:absolute;left:1033px;top:57px" width="32" height="32" viewBox="0 0 32 32"><g fill="none" stroke="#111" stroke-width="1"><rect x="8.5" y="8.5" width="6" height="6"/><rect x="17.5" y="8.5" width="6" height="6"/><rect x="8.5" y="17.5" width="6" height="6"/><rect x="17.5" y="17.5" width="6" height="6"/><path d="M9.5 9.5 L13.5 13.5 M18.5 13.5 L22.5 9.5 M9.5 22.5 L13.5 18.5 M18.5 18.5 L22.5 22.5"/></g></svg>
<div style="position:absolute;left:0;top:389px;width:14px;height:60px;background:#eeeeee;border-radius:0 3px 3px 0"></div>
<svg style="position:absolute;left:0;top:389px" width="14" height="60" viewBox="0 0 14 60"><path d="M9 25 L5 30 L9 35" fill="none" stroke="#333" stroke-width="1.1"/></svg>
<div style="position:absolute;left:6px;top:818px;width:140px;height:18px;border:2px solid #000;background:#929292;font:bold 12px 'Liberation Sans',sans-serif;color:#111;line-height:16px;padding-left:5px">10 mi</div>
<div style="position:absolute;left:432px;top:821px;width:648px;height:16px;background:#b3b4b5;font:12px 'Liberation Sans',sans-serif;color:#555;line-height:16px;white-space:nowrap;overflow:hidden">
<span style="position:absolute;left:5px;top:0;letter-spacing:-0.18px">Esri, TomTom, Garmin, SafeGraph, FAO, METI/NASA, USGS, EPA, NPS, USFWS | Cape Cod Commi…</span>
<span style="position:absolute;right:6px;top:0">Powered by Esri</span></div>
</div>
</body></html>
